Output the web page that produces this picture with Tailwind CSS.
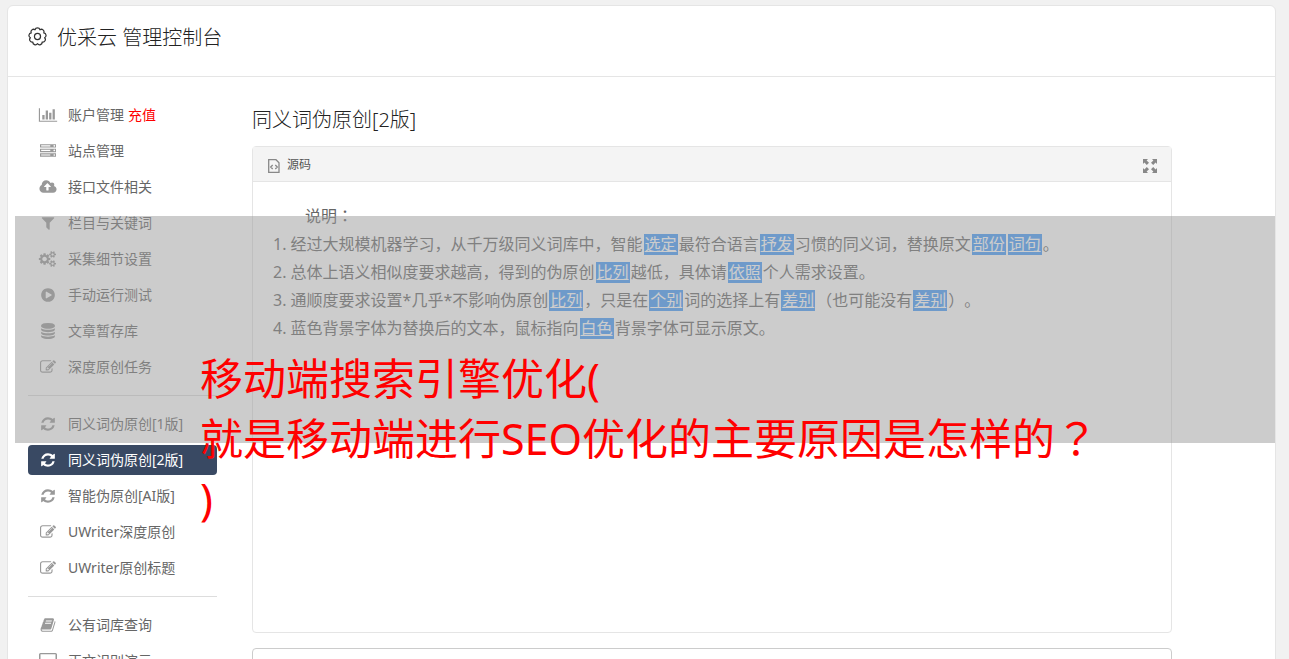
<!DOCTYPE html>
<html lang="zh-CN">
<head>
  <meta charset="UTF-8">
  <meta name="viewport" content="width=device-width, initial-scale=1.0">
  <script src="https://cdn.jsdelivr.net/npm/@tailwindcss/browser@4"></script>
  <title>优采云 管理控制台</title>
</head>
<body class="h-screen overflow-hidden bg-[#f1f1f1] font-['Noto_Sans','Noto_Sans_CJK_SC',sans-serif] text-sm text-[#666] [text-spacing-trim:space-all]">
  <!-- icons -->
  <svg class="hidden">
    <symbol id="chart" viewBox="0 0 2048 1792"><path d="M640 896v512h-256v-512h256zm384-512v1024h-256v-1024h256zm1024 1152v128h-2048v-1536h128v1408h1920zm-640-896v768h-256v-768h256zm384-384v1152h-256v-1152h256z"/></symbol>
    <symbol id="server" viewBox="0 0 1792 1792"><path d="M128 1408h1024v-128h-1024v128zm0-512h1024v-128h-1024v128zm1568 448q0-40-28-68t-68-28-68 28-28 68 28 68 68 28 68-28 28-68zm-1568-960h1024v-128h-1024v128zm1568 448q0-40-28-68t-68-28-68 28-28 68 28 68 68 28 68-28 28-68zm0-512q0-40-28-68t-68-28-68 28-28 68 28 68 68 28 68-28 28-68zm96 832v384h-1792v-384h1792zm0-512v384h-1792v-384h1792zm0-512v384h-1792v-384h1792z"/></symbol>
    <symbol id="cloud" viewBox="0 0 1920 1792"><path d="M1280 864q0-14-9-23l-352-352q-9-9-23-9t-23 9l-351 351q-10 12-10 24 0 14 9 23t23 9h224v352q0 13 9.500 22.500t22.500 9.500h192q13 0 22.500-9.500t9.500-22.500v-352h224q13 0 22.500-9.500t9.500-22.500zm640 288q0 159-112.500 271.500t-271.500 112.500h-1088q-185 0-316.500-131.500t-131.500-316.500q0-130 70-240t188-165q-2-30-2-43 0-212 150-362t362-150q156 0 285.500 87t188.500 231q71-62 166-62 106 0 181 75t75 181q0 76-41 138 130 31 213.500 135.500t83.500 238.500z"/></symbol>
    <symbol id="filter" viewBox="0 0 1792 1792"><path d="M1595 295q17 41-14 70l-493 493v742q0 42-39 59-13 5-25 5-27 0-45-19l-256-256q-19-19-19-45v-486l-493-493q-31-29-14-70 17-39 59-39h1280q42 0 59 39z"/></symbol>
    <symbol id="cogs" viewBox="0 0 1920 1792"><path d="M832 896q0-106-75-181t-181-75-181 75-75 181 75 181 181 75 181-75 75-181zm768 512q0-52-38-90t-90-38-90 38-38 90q0 53 37.500 90.500t90.500 37.500 90.500-37.500 37.500-90.500zm0-1024q0-52-38-90t-90-38-90 38-38 90q0 53 37.500 90.500t90.500 37.500 90.500-37.500 37.500-90.500zm-384 421v185q0 10-7 19.500t-16 10.500l-155 24q-11 35-32 76 34 48 90 115 7 11 7 20 0 12-7 19-23 30-82.500 89.500t-78.500 59.500q-11 0-21-7l-115-90q-37 19-77 31-11 108-23 155-7 24-30 24h-186q-11 0-20-7.500t-10-17.500l-23-153q-34-10-75-31l-118 89q-7 7-20 7-11 0-21-8-144-133-144-160 0-9 7-19 10-14 41-53t47-61q-23-44-35-82l-152-24q-10-1-17-9.500t-7-19.500v-185q0-10 7-19.500t16-10.500l155-24q11-35 32-76-34-48-90-115-7-11-7-20 0-12 7-20 22-30 82-89t79-59q11 0 21 7l115 90q34-18 77-32 11-108 23-154 7-24 30-24h186q11 0 20 7.500t10 17.500l23 153q34 10 75 31l118-89q8-7 20-7 11 0 21 8 144 133 144 160 0 8-7 19-12 16-42 54t-45 60q23 48 34 82l152 23q10 2 17 10.500t7 19.500zm640 533v140q0 16-149 31-12 27-30 52 51 113 51 138 0 4-4 7-122 71-124 71-8 0-46-47t-52-68q-20 2-30 2t-30-2q-14 21-52 68t-46 47q-2 0-124-71-4-3-4-7 0-25 51-138-18-25-30-52-149-15-149-31v-140q0-16 149-31 13-29 30-52-51-113-51-138 0-4 4-7 4-2 35-20t59-34 30-16q8 0 46 46.500t52 67.500q20-2 30-2t30 2q51-71 92-112l6-2q4 0 124 70 4 3 4 7 0 25-51 138 17 23 30 52 149 15 149 31zm0-1024v140q0 16-149 31-12 27-30 52 51 113 51 138 0 4-4 7-122 71-124 71-8 0-46-47t-52-68q-20 2-30 2t-30-2q-14 21-52 68t-46 47q-2 0-124-71-4-3-4-7 0-25 51-138-18-25-30-52-149-15-149-31v-140q0-16 149-31 13-29 30-52-51-113-51-138 0-4 4-7 4-2 35-20t59-34 30-16q8 0 46 46.500t52 67.500q20-2 30-2t30 2q51-71 92-112l6-2q4 0 124 70 4 3 4 7 0 25-51 138 17 23 30 52 149 15 149 31z"/></symbol>
    <symbol id="play" viewBox="0 0 1792 1792"><path d="M896 128q209 0 385.500 103t279.500 279.500 103 385.500-103 385.500-279.500 279.500-385.500 103-385.500-103-279.500-279.500-103-385.500 103-385.500 279.500-279.500 385.500-103zm384 823q32-18 32-55t-32-55l-544-320q-31-19-64-1-32 19-32 56v640q0 37 32 56 16 8 32 8 17 0 32-9z"/></symbol>
    <symbol id="database" viewBox="0 0 1792 1792"><path d="M896 768q237 0 443-43t325-127v170q0 69-103 128t-280 93.500-385 34.500-385-34.500-280-93.500-103-128v-170q119 84 325 127t443 43zm0 768q237 0 443-43t325-127v170q0 69-103 128t-280 93.500-385 34.500-385-34.500-280-93.500-103-128v-170q119 84 325 127t443 43zm0-384q237 0 443-43t325-127v170q0 69-103 128t-280 93.500-385 34.500-385-34.500-280-93.500-103-128v-170q119 84 325 127t443 43zm0-1152q208 0 385 34.500t280 93.500 103 128v128q0 69-103 128t-280 93.500-385 34.500-385-34.500-280-93.500-103-128v-128q0-69 103-128t280-93.500 385-34.500z"/></symbol>
    <symbol id="edit" viewBox="0 0 1792 1792"><path d="M888 1184l116-116-152-152-116 116v56h96v96h56zm440-720q-16-16-33 1l-350 350q-17 17-1 33t33-1l350-350q17-17 1-33zm80 594v190q0 119-84.500 203.500t-203.500 84.500h-832q-119 0-203.500-84.500t-84.500-203.500v-832q0-119 84.500-203.500t203.500-84.500h832q63 0 117 25 15 7 18 23 3 17-9 29l-49 49q-14 14-32 8-23-6-45-6h-832q-66 0-113 47t-47 113v832q0 66 47 113t113 47h832q66 0 113-47t47-113v-126q0-13 9-22l64-64q15-15 35-7t20 29zm-96-738l288 288-672 672h-288v-288zm444 132l-92 92-288-288 92-92q28-28 68-28t68 28l152 152q28 28 28 68t-28 68z"/></symbol>
    <symbol id="refresh" viewBox="0 0 1792 1792"><path d="M1639 1056q0 5-1 7-64 268-268 434.500t-478 166.500q-146 0-282.500-55t-243.500-157l-129 129q-19 19-45 19t-45-19-19-45v-448q0-26 19-45t45-19h448q26 0 45 19t19 45-19 45l-137 137q71 66 161 102t187 36q134 0 250-65t186-179q11-17 53-117 8-23 30-23h192q13 0 22.500 9.500t9.500 22.500zm25-800v448q0 26-19 45t-45 19h-448q-26 0-45-19t-19-45 19-45l138-138q-148-137-349-137-134 0-250 65t-186 179q-11 17-53 117-8 23-30 23h-199q-13 0-22.500-9.500t-9.500-22.500v-7q65-268 270-434.500t480-166.500q146 0 284 55.500t245 156.500l130-129q19-19 45-19t45 19 19 45z"/></symbol>
    <symbol id="book" viewBox="0 0 1792 1792"><path d="M1703 478q40 57 18 129l-275 906q-19 64-76.500 107.500t-122.500 43.500h-923q-77 0-148.500-53.500t-99.500-131.500q-24-67-2-127 0-4 3-27t4-37q1-8-3-21.500t-3-19.500q2-11 8-21t16.500-23.500 16.500-23.500q23-38 45-91.500t30-91.500q3-10 .5-30t-.5-28q3-11 17-28t17-23q21-36 42-92t25-90q1-9-2.500-32t.5-28q4-13 22-30.500t22-22.500q19-26 42.500-84.500t27.500-96.500q1-8-3-25.500t-2-26.500q2-8 9-18t18-23 17-21q8-12 16.500-30.500t15-35 16-36 19.500-32 26.500-23.500 36-11.500 47.500 5.500l-1 3q38-9 51-9h761q74 0 114 56t18 130l-274 906q-36 119-71.500 153.500t-128.500 34.500h-869q-27 0-38 15-11 16-1 43 24 70 144 70h923q29 0 56-15.500t35-41.500l300-987q7-22 5-57 38 15 59 43zm-1064 2q-4 13 2 22.500t20 9.500h608q13 0 25.500-9.500t16.500-22.500l21-64q4-13-2-22.500t-20-9.500h-608q-13 0-25.500 9.500t-16.500 22.500zm-83 256q-4 13 2 22.500t20 9.500h608q13 0 25.500-9.500t16.500-22.500l21-64q4-13-2-22.500t-20-9.500h-608q-13 0-25.500 9.500t-16.500 22.500z"/></symbol>
    <symbol id="desktop" viewBox="0 0 18 16"><path d="M1.500 0h15A1.500 1.500 0 0 1 18 1.500v10a1.500 1.500 0 0 1-1.500 1.500H11v2h2v1H5v-1h2v-2H1.500A1.500 1.500 0 0 1 0 11.500v-10A1.500 1.500 0 0 1 1.500 0zm0 1.200v8.600h15V1.200z"/></symbol>
  </svg>

  <div class="ml-[7px] mr-[13px] mt-[5px] min-h-screen rounded-md border border-[#e5e5e5] bg-white">
    <header class="flex h-[71px] items-start gap-2.5 border-b border-[#e5e5e5] pl-5 pt-[17px]">
      <svg class="mt-1 size-[19px]" viewBox="0 0 20 20" fill="none" stroke="#333" stroke-width="1.300" stroke-linejoin="round"><path d="M12.600 2.900A2.700 2.700 0 0 1 16.600 6.200A2.700 2.700 0 0 1 17.500 11.300A2.700 2.700 0 0 1 14.900 15.800A2.700 2.700 0 0 1 10 17.600A2.700 2.700 0 0 1 5.100 15.800A2.700 2.700 0 0 1 2.500 11.300A2.700 2.700 0 0 1 3.400 6.200A2.700 2.700 0 0 1 7.400 2.900A2.700 2.700 0 0 1 12.600 2.900z"/><circle cx="10" cy="10" r="3.200"/></svg>
      <h1 class="text-xl font-light leading-[30px] text-[#222]">优采云 管理控制台</h1>
    </header>

    <div class="flex items-start pl-5 pt-[23px]">
      <nav class="w-[189px] shrink-0">
        <ul class="flex flex-col gap-1.5 leading-[30px] text-[#666] [&_svg]:h-4 [&_svg]:w-5 [&_svg]:shrink-0 [&_svg]:fill-[#999] [&_a]:flex [&_a]:items-center [&_a]:gap-2.5 [&_a]:rounded [&_a]:pl-2.5">
          <li class="flex"><a href="#"><svg><use href="#chart"/></svg>账户管理</a><a href="#" class="pl-1! text-[#f00]">充值</a></li>
          <li><a href="#"><svg><use href="#server"/></svg>站点管理</a></li>
          <li><a href="#"><svg><use href="#cloud"/></svg>接口文件相关</a></li>
          <li><a href="#"><svg><use href="#filter"/></svg>栏目与关键词</a></li>
          <li><a href="#"><svg><use href="#cogs"/></svg>采集细节设置</a></li>
          <li><a href="#"><svg><use href="#play"/></svg>手动运行测试</a></li>
          <li><a href="#"><svg><use href="#database"/></svg>文章暂存库</a></li>
          <li><a href="#"><svg><use href="#edit"/></svg>深度原创任务</a></li>
          <li class="my-[7px] border-t border-[#ddd]"></li>
          <li><a href="#"><svg><use href="#refresh"/></svg>同义词伪原创[1版]</a></li>
          <li><a href="#" class="bg-[#394963] text-white"><svg class="fill-white!"><use href="#refresh"/></svg>同义词伪原创[2版]</a></li>
          <li><a href="#"><svg><use href="#refresh"/></svg>智能伪原创[AI版]</a></li>
          <li><a href="#"><svg><use href="#edit"/></svg>UWriter深度原创</a></li>
          <li><a href="#"><svg><use href="#edit"/></svg>UWriter原创标题</a></li>
          <li class="my-[7px] border-t border-[#ddd]"></li>
          <li><a href="#"><svg><use href="#book"/></svg>公有词库查询</a></li>
          <li><a href="#"><svg><use href="#desktop"/></svg>正文识别演示</a></li>
        </ul>
      </nav>

      <main class="ml-[35px] mr-[103px] flex-1 pt-1">
        <h2 class="text-xl font-light leading-8 text-[#222]">同义词伪原创[2版]</h2>

        <section class="mt-2.5 rounded border border-[#e5e5e5]">
          <div class="flex h-[35px] items-center justify-between border-b border-[#e5e5e5] bg-[#f4f4f4] px-3.5 pt-0.5 text-xs text-[#555]">
            <button type="button" class="flex items-center gap-1.5">
              <svg class="h-4 w-3.5" viewBox="0 0 14 16" fill="none" stroke="#888" stroke-width="1.300"><path d="M1.700 2.700h7.300l3 3v9.600H1.700z M5.700 8l-2 2 2 2 M8.300 8l2 2-2 2"/></svg>
              源码
            </button>
            <button type="button" aria-label="全屏">
              <svg class="h-4 w-3.5" viewBox="0 0 14 16" fill="#888"><path d="M0 2h5L3.600 3.400 6 5.800 3.800 8 1.400 5.600 0 7z M14 2v5l-1.400-1.400L10.200 8 8 5.800l2.400-2.400L9 2z M0 16v-5l1.400 1.400L3.800 10 6 12.200l-2.400 2.400L5 16z M14 16H9l1.400-1.400L8 12.200l2.200-2.200 2.400 2.400L14 11z"/></svg>
            </button>
          </div>
          <div class="min-h-[450px] px-5 pt-5 text-base leading-7 [&_mark]:mx-px [&_mark]:inline-block [&_mark]:bg-[#439bfb] [&_mark]:px-px [&_mark]:leading-[21px] [&_mark]:text-white [&_mark]:underline">
            <p class="pl-8">说明<span class="font-['Noto_Sans_CJK_TC',sans-serif] leading-none" lang="zh-Hant">：</span></p>
            <ol>
              <li>1. 经过大规模机器学习，从千万级同义词库中，智能<mark>选定</mark>最符合语言<mark>抒发</mark>习惯的同义词，替换原文<mark>部份</mark><mark>词句</mark>。</li>
              <li>2. 总体上语义相似度要求越高，得到的伪原创<mark>比列</mark>越低，具体请<mark>依照</mark>个人需求设置。</li>
              <li>3. 通顺度要求设置*几乎*不影响伪原创<mark>比列</mark>，只是在<mark>个别</mark>词的选择上有<mark>差别</mark>（也可能没有<mark>差别</mark>）。</li>
              <li>4. 蓝色背景字体为替换后的文本，鼠标指向<mark>白色</mark>背景字体可显示原文。</li>
            </ol>
          </div>
        </section>

        <textarea aria-label="原文" class="mt-[15px] block h-40 w-full resize-none rounded border border-[#ccc]"></textarea>
      </main>
    </div>
  </div>

  <!-- headline banner -->
  <div class="absolute left-[15px] right-3.5 top-[216px] h-[227px] bg-[#999]/50 pl-[185px] pt-[133px] text-[43px] leading-[60px] text-[#f00]">
    <p>移动端搜索引擎优化(<br>就是移动端进行SEO优化的主要原因是怎样的<span class="font-['Noto_Sans_CJK_TC',sans-serif] leading-none" lang="zh-Hant">？</span><br>)</p>
  </div>
</body>
</html>
